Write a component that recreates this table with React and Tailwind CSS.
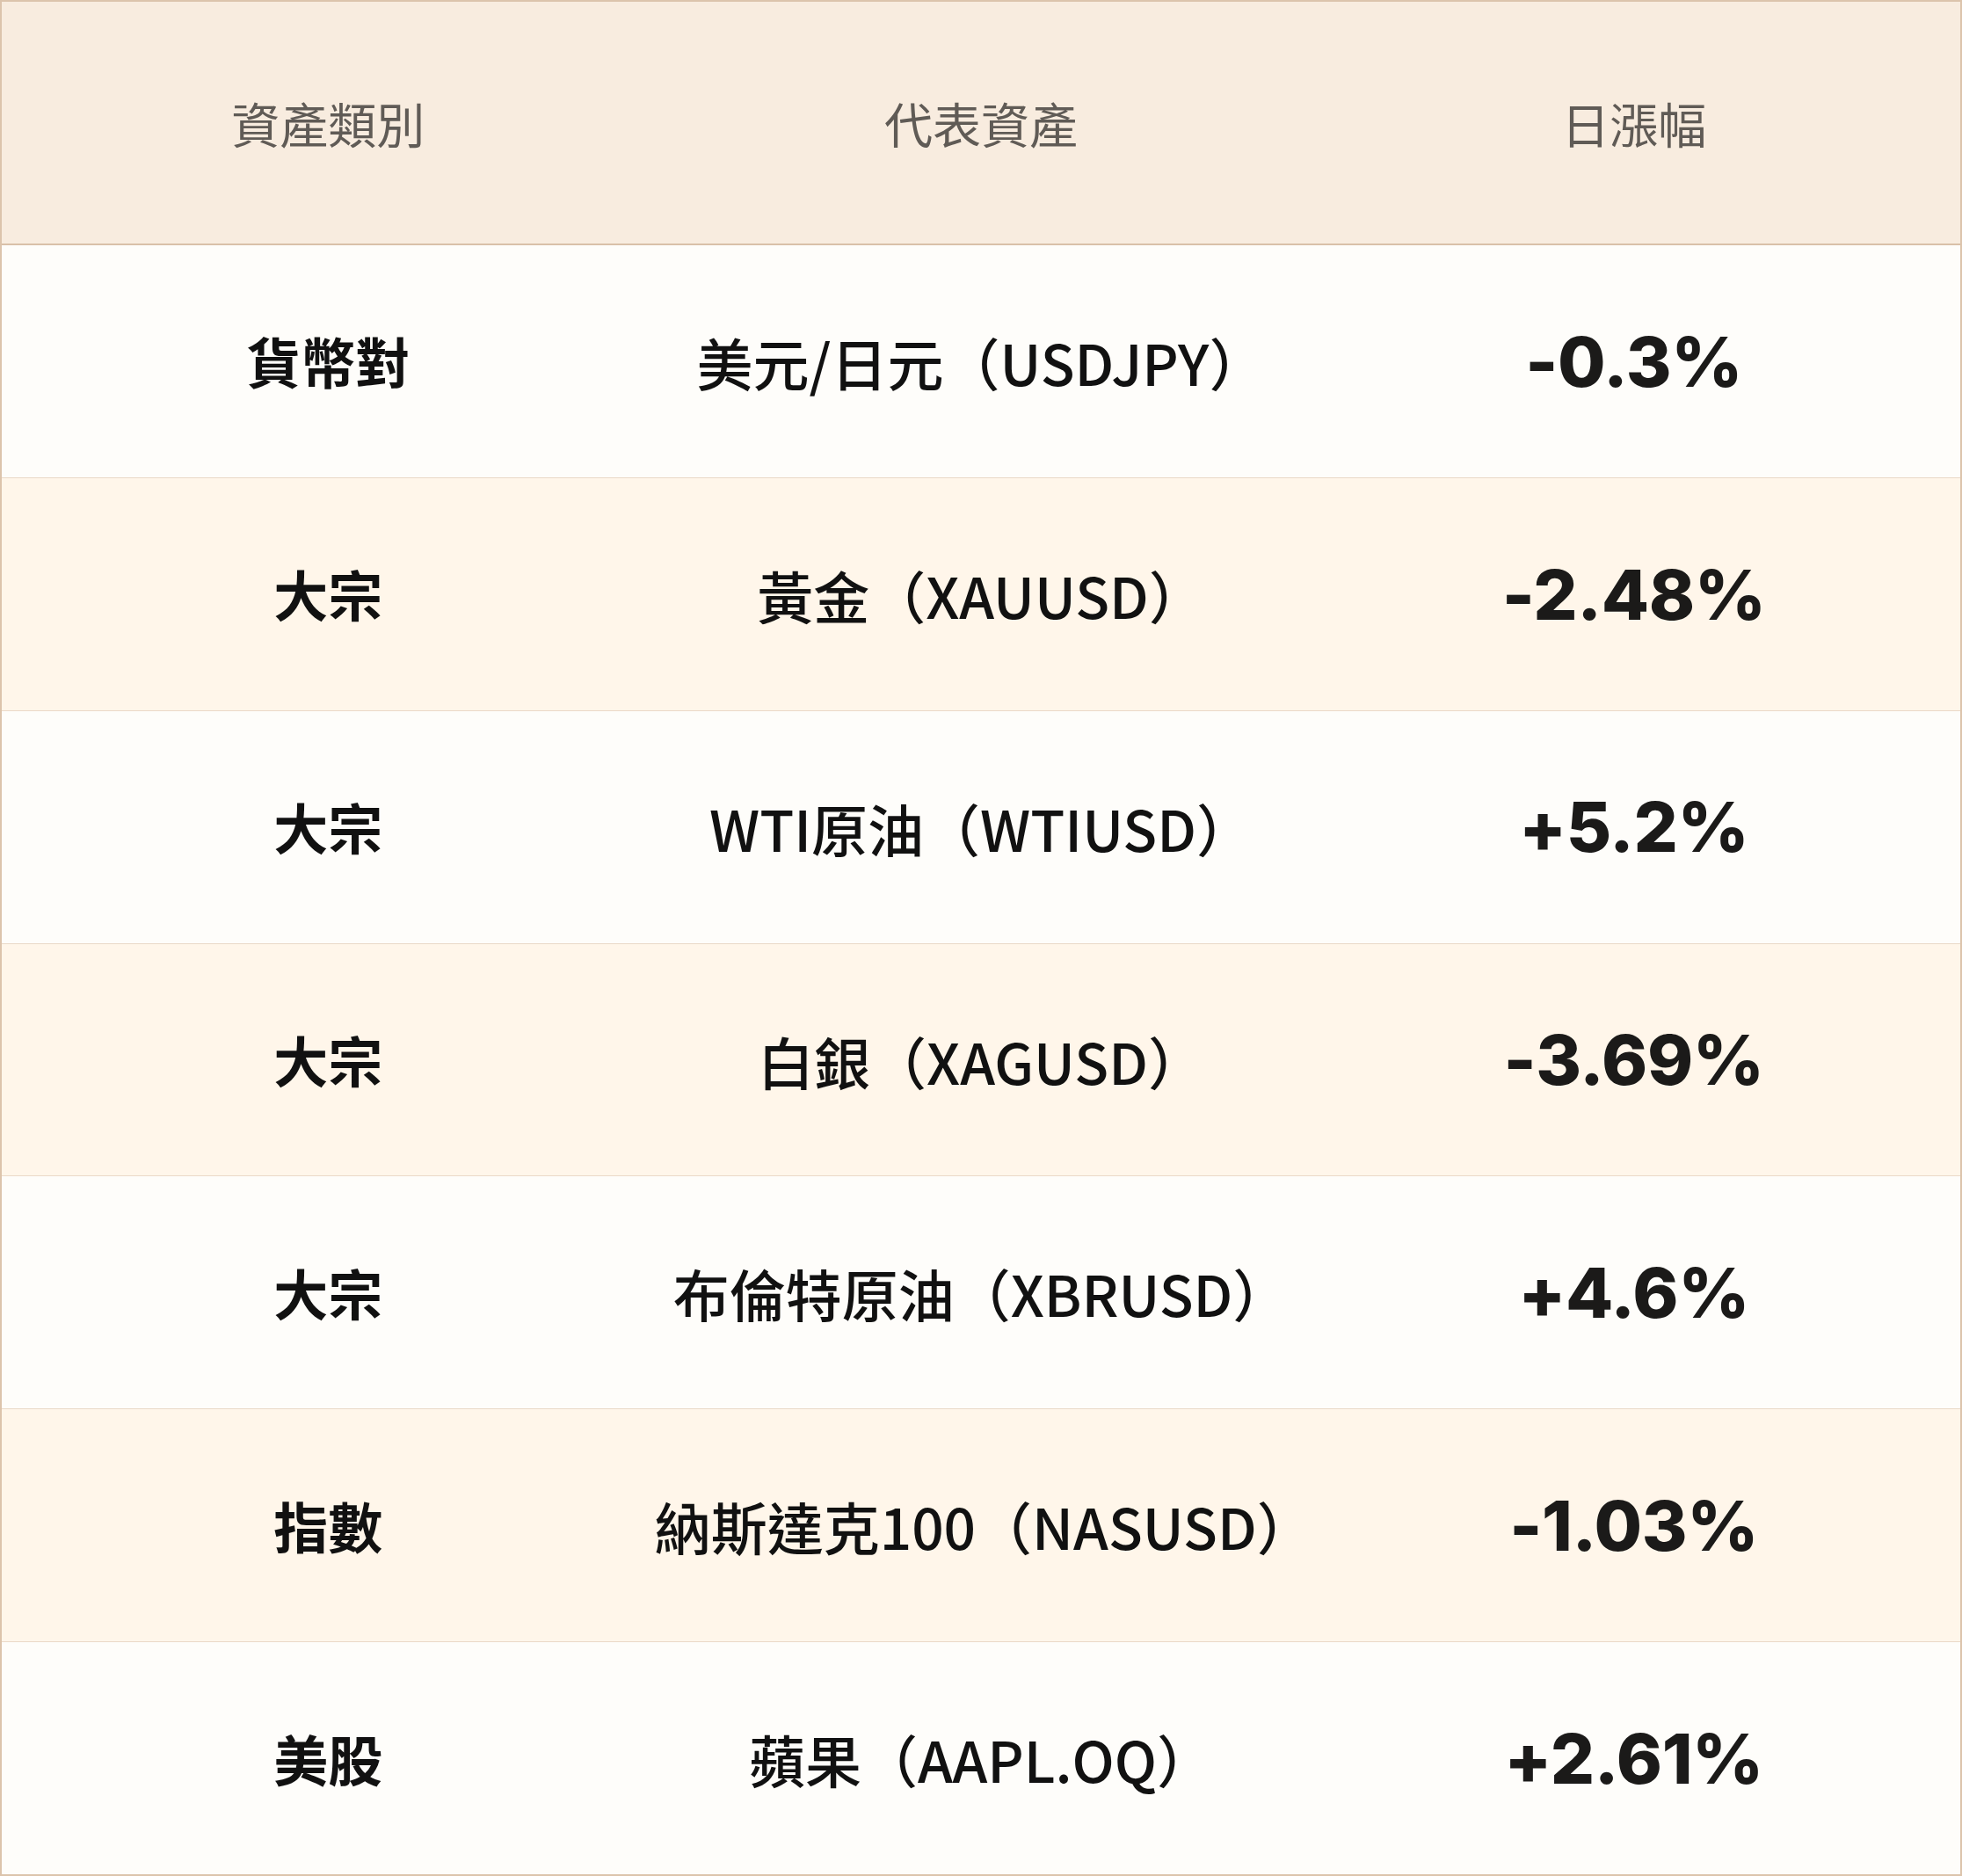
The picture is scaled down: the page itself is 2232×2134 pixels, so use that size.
const rows = [
  { type: '貨幣對', asset: '美元/日元（USDJPY）', change: '-0.3%' },
  { type: '大宗', asset: '黃金（XAUUSD）', change: '-2.48%' },
  { type: '大宗', asset: 'WTI原油（WTIUSD）', change: '+5.2%' },
  { type: '大宗', asset: '白銀（XAGUSD）', change: '-3.69%' },
  { type: '大宗', asset: '布倫特原油（XBRUSD）', change: '+4.6%' },
  { type: '指數', asset: '納斯達克100（NASUSD）', change: '-1.03%' },
  { type: '美股', asset: '蘋果（AAPL.OQ）', change: '+2.61%' },
];

const cjk = "font-['Noto_Sans_CJK_TC','Noto_Sans_CJK_SC',sans-serif]";

export default function App() {
  return (
    <div className="w-[2232px] h-[2134px] flex flex-col border-2 border-[#dcc4ac] bg-[#fefdfa] overflow-hidden">
      <div className={`h-[277px] shrink-0 grid grid-cols-3 items-center bg-[#f8ecdf] border-b-2 border-[#d9c0a8] text-[55px] text-[#605b56] ${cjk}`}>
        <div className="text-center">資產類別</div>
        <div className="text-center">代表資產</div>
        <div className="text-center">日漲幅</div>
      </div>
      {rows.map((r, i) => (
        <div
          key={i}
          className={`flex-1 grid grid-cols-3 items-center ${i % 2 ? 'bg-[#fff6ea]' : 'bg-[#fefdfa]'} ${i < rows.length - 1 ? 'border-b border-[#ead9c7]' : ''}`}
        >
          <div className={`text-center text-[62px] font-semibold text-[#111] ${cjk}`}>{r.type}</div>
          <div className={`text-center text-[64px] font-medium text-[#111] ${cjk}`}>{r.asset}</div>
          <div className="text-center text-[79px] font-extrabold tracking-[-0.005em] text-[#1b1a19] font-['Inter',sans-serif]">{r.change}</div>
        </div>
      ))}
    </div>
  );
}
